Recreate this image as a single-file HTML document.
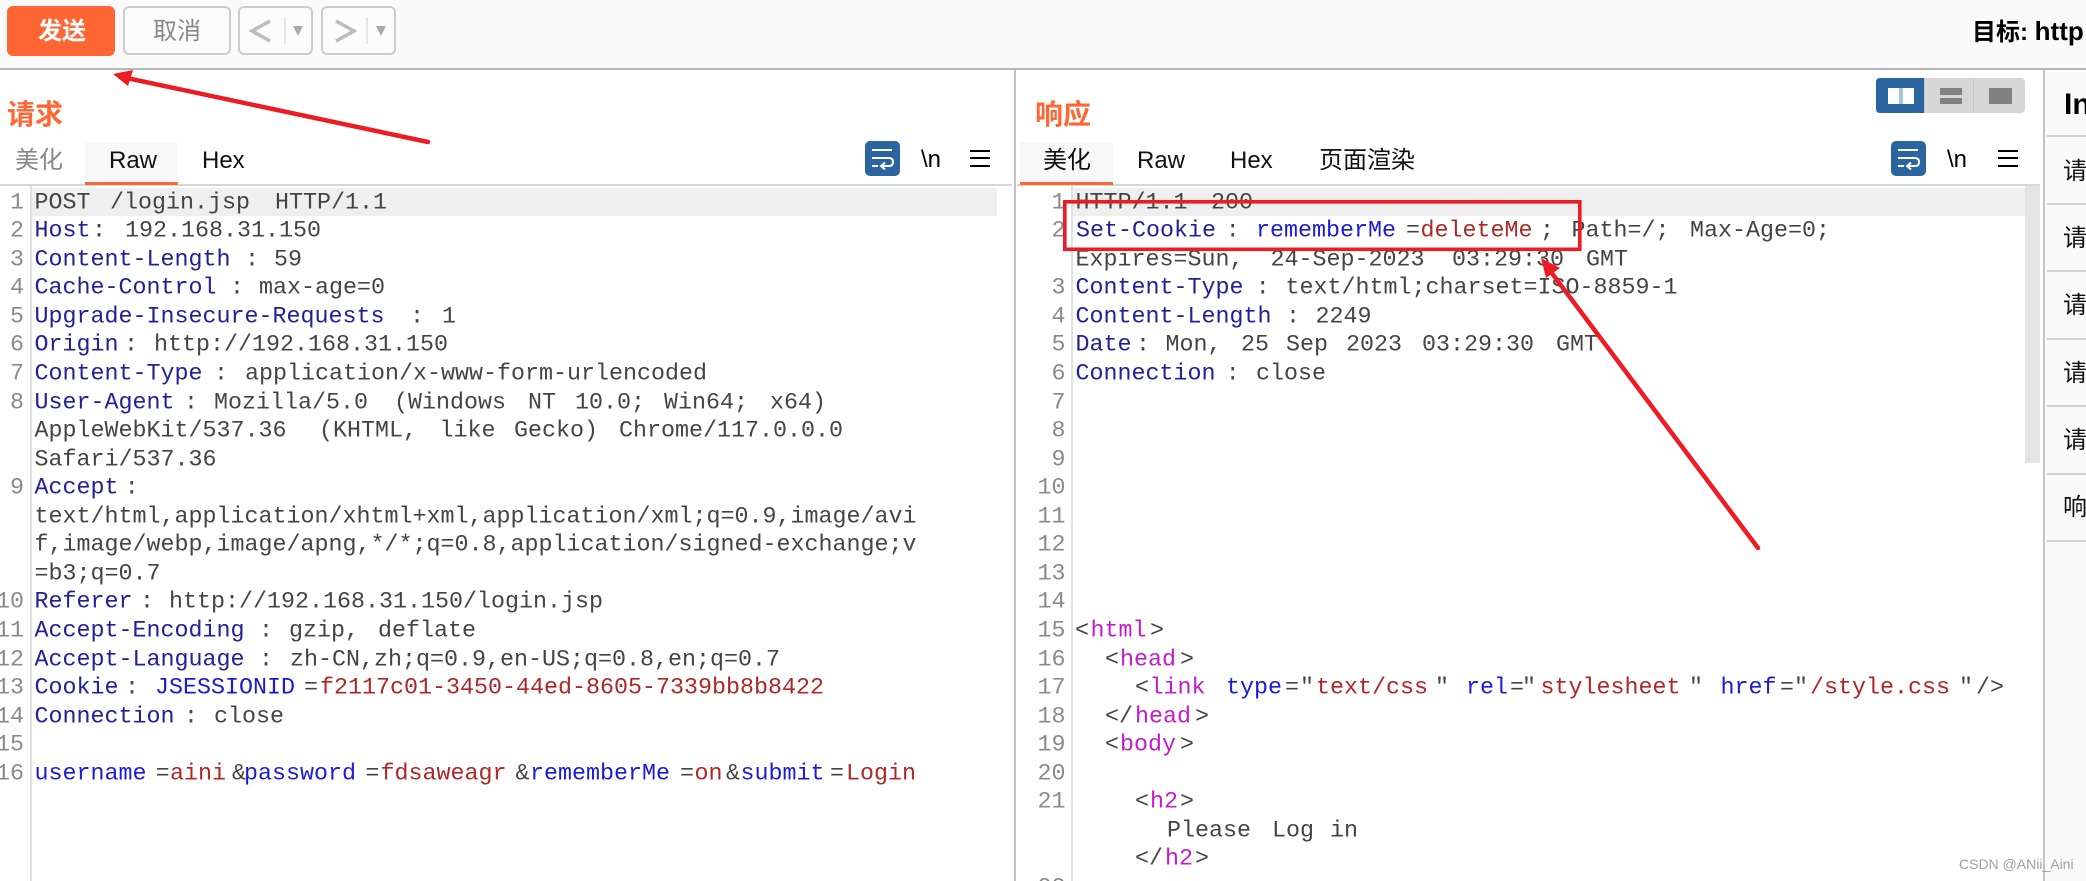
<!DOCTYPE html>
<html lang="zh">
<head>
<meta charset="utf-8">
<title>Repeater</title>
<style>
html{margin:0;padding:0;background:#fff;width:2086px;height:881px;overflow:hidden}
body{margin:0;padding:0;background:#fff;position:relative;width:2086px;height:881px;overflow:hidden;font-family:"Liberation Sans","Noto Sans CJK SC",sans-serif}
.a{position:absolute}
.btn{position:absolute;box-sizing:border-box;border:2px solid #ccc;border-radius:6px;background:#fcfcfc;top:6px;height:49px}
.tx{position:absolute;white-space:pre;line-height:34px;height:34px}
.tab{position:absolute;top:144px;font-size:24px;line-height:34px;height:34px;color:#111;white-space:pre}
.r{position:absolute;left:0;width:0;height:28.55px;font-family:"Liberation Mono",monospace;font-size:23.33px;line-height:28.55px;color:#444;transform:translateY(1.7px)}
.r span{position:absolute;top:0;white-space:pre}
.r b{position:absolute;top:0;font-weight:400;color:#8a8a8a;text-align:right;width:40px}
.L b{left:-16px}
.R b{left:1025.5px}
.k{color:#20209a}
.p{color:#1a1ad8}
.v{color:#b02626}
.t{color:#c41cc8}
.side{position:absolute;left:2047px;width:39px;height:2px;background:#d2d2d2}
.sq{position:absolute;left:2063px;font-size:24px;line-height:34px;color:#111}
</style>
</head>
<body>
<!-- toolbar -->
<div class="a" style="left:0;top:0;width:2086px;height:68px;background:#fafafa"></div>
<div class="a" style="left:0;top:68px;width:2086px;height:2px;background:#b9b5b5"></div>
<div class="a" style="left:7px;top:6px;width:108px;height:50px;background:#ff6633;border-radius:6px"></div>
<div class="tx" style="left:38px;top:15px;font-size:24px;font-weight:700;color:#fff">发送</div>
<div class="btn" style="left:123px;width:108px"></div>
<div class="tx" style="left:153px;top:15px;font-size:24px;color:#888">取消</div>
<div class="btn" style="left:238px;width:75px"></div>
<div class="btn" style="left:321px;width:75px"></div>
<svg class="a" style="left:0;top:0" width="420" height="68">
<polyline points="270,21 252,31 270,41" fill="none" stroke="#bbb" stroke-width="3.5"/>
<rect x="284" y="17" width="2" height="27" fill="#e6e6e6"/>
<polygon points="293,26 303,26 298,36" fill="#aaa"/>
<polyline points="336,21 354,31 336,41" fill="none" stroke="#bbb" stroke-width="3.5"/>
<rect x="366" y="17" width="2" height="27" fill="#e6e6e6"/>
<polygon points="376,26 386,26 381,36" fill="#aaa"/>
</svg>
<div class="tx" style="left:1972px;top:14px;font-size:24px;font-weight:700;color:#000;width:114px;overflow:hidden">目标: <span style="font-size:26px">http</span></div>

<!-- pane dividers -->
<div class="a" style="left:1014px;top:70px;width:2px;height:811px;background:#c4c4c4"></div>
<div class="a" style="left:2045px;top:70px;width:41px;height:811px;background:#fafafa"></div>
<div class="a" style="left:2043px;top:70px;width:2px;height:811px;background:#c4c4c4"></div>

<!-- headings -->
<div class="tx" style="left:7px;top:98px;font-size:28px;font-weight:700;color:#ff6633">请求</div>
<div class="tx" style="left:1035px;top:98px;font-size:28px;font-weight:700;color:#ff6633">响应</div>

<!-- tab lines -->
<div class="a" style="left:0;top:184px;width:1012px;height:2px;background:#d3d8d8"></div>
<div class="a" style="left:1017px;top:184px;width:1023px;height:2px;background:#d3d8d8"></div>
<div class="a" style="left:85px;top:142px;width:93px;height:40px;background:#f8f8f8"></div>
<div class="a" style="left:85px;top:182px;width:93px;height:3px;background:#ff6633"></div>
<div class="a" style="left:1020px;top:142px;width:93px;height:40px;background:#f8f8f8"></div>
<div class="a" style="left:1020px;top:182px;width:93px;height:3px;background:#ff6633"></div>
<div class="tab" style="left:15px;color:#888">美化</div>
<div class="tab" style="left:109px">Raw</div>
<div class="tab" style="left:202px">Hex</div>
<div class="tab" style="left:1043px">美化</div>
<div class="tab" style="left:1137px">Raw</div>
<div class="tab" style="left:1230px">Hex</div>
<div class="tab" style="left:1319px">页面渲染</div>

<!-- toggle -->
<svg class="a" style="left:1876px;top:78px" width="149" height="35">
<rect x="0" y="0" width="149" height="35" rx="4" fill="#d6d6d6"/>
<path d="M4 0H48V35H4Q0 35 0 31V4Q0 0 4 0Z" fill="#2a659f"/>
<rect x="97" y="0" width="1" height="35" fill="#c6c6c6"/>
<rect x="48" y="0" width="1" height="35" fill="#c6c6c6"/>
<rect x="12" y="10" width="26" height="16" fill="#a9c4de"/>
<rect x="12" y="10" width="11" height="16" fill="#fff"/>
<rect x="27" y="10" width="11" height="16" fill="#fff"/>
<rect x="64" y="10" width="22" height="7" fill="#808080"/>
<rect x="64" y="20" width="22" height="6" fill="#808080"/>
<rect x="113" y="10" width="23" height="16" fill="#808080"/>
</svg>

<!-- editor icons -->
<svg class="a" style="left:865px;top:141px" width="130" height="36">
<rect x="0" y="0" width="35" height="35" rx="5" fill="#2a659f"/>
<path d="M7 9H27M7 17H24Q28 17 28 21Q28 25 24 25H17M20 21.5L16 25L20 28.5M7 25H13" fill="none" stroke="#fff" stroke-width="2"/>
<text x="56" y="26" font-family="Liberation Sans" font-size="24" fill="#000">\n</text>
<path d="M105 10H125M105 17H125M105 25H125" fill="none" stroke="#000" stroke-width="2"/>
</svg>
<svg class="a" style="left:1891px;top:141px" width="130" height="36">
<rect x="0" y="0" width="35" height="35" rx="5" fill="#2a659f"/>
<path d="M7 9H27M7 17H24Q28 17 28 21Q28 25 24 25H17M20 21.5L16 25L20 28.5M7 25H13" fill="none" stroke="#fff" stroke-width="2"/>
<text x="56" y="26" font-family="Liberation Sans" font-size="24" fill="#000">\n</text>
<path d="M107 10H127M107 17H127M107 25H127" fill="none" stroke="#000" stroke-width="2"/>
</svg>

<!-- gutter / highlights -->
<div class="a" style="left:30px;top:186px;width:2px;height:695px;background:#e0e0e0"></div>
<div class="a" style="left:1071px;top:186px;width:2px;height:695px;background:#e0e0e0"></div>
<div class="a" style="left:32px;top:188px;width:965px;height:28px;background:#efefef"></div>
<div class="a" style="left:1073px;top:188px;width:952px;height:28px;background:#efefef"></div>
<div class="a" style="left:2025px;top:186px;width:15px;height:277px;background:#e4e4e4"></div>

<!-- request -->
<div class="r L" style="top:187.7px"><b>1</b><span style="left:34.5px">POST</span><span style="left:110px">/login.jsp</span><span style="left:275px">HTTP/1.1</span></div>
<div class="r L" style="top:216.25px"><b>2</b><span class="k" style="left:34.5px">Host</span><span style="left:92px">:</span><span style="left:125px">192.168.31.150</span></div>
<div class="r L" style="top:244.8px"><b>3</b><span class="k" style="left:34.5px">Content-Length</span><span style="left:245px">:</span><span style="left:274px">59</span></div>
<div class="r L" style="top:273.35px"><b>4</b><span class="k" style="left:34.5px">Cache-Control</span><span style="left:230px">:</span><span style="left:259px">max-age=0</span></div>
<div class="r L" style="top:301.9px"><b>5</b><span class="k" style="left:34.5px">Upgrade-Insecure-Requests</span><span style="left:410px">:</span><span style="left:442px">1</span></div>
<div class="r L" style="top:330.45px"><b>6</b><span class="k" style="left:34.5px">Origin</span><span style="left:124px">:</span><span style="left:154px">http://192.168.31.150</span></div>
<div class="r L" style="top:359px"><b>7</b><span class="k" style="left:34.5px">Content-Type</span><span style="left:214px">:</span><span style="left:245px">application/x-www-form-urlencoded</span></div>
<div class="r L" style="top:387.55px"><b>8</b><span class="k" style="left:34.5px">User-Agent</span><span style="left:184px">:</span><span style="left:214px">Mozilla/5.0</span><span style="left:394px">(Windows</span><span style="left:528px">NT</span><span style="left:575px">10.0;</span><span style="left:664px">Win64;</span><span style="left:770px">x64)</span></div>
<div class="r L" style="top:416.1px"><span style="left:34.5px">AppleWebKit/537.36</span><span style="left:319px">(KHTML,</span><span style="left:439.5px">like</span><span style="left:514px">Gecko)</span><span style="left:619px">Chrome/117.0.0.0</span></div>
<div class="r L" style="top:444.65px"><span style="left:34.5px">Safari/537.36</span></div>
<div class="r L" style="top:473.2px"><b>9</b><span class="k" style="left:34.5px">Accept</span><span style="left:124.7px">:</span></div>
<div class="r L" style="top:501.75px"><span style="left:34.5px">text/html,application/xhtml+xml,application/xml;q=0.9,image/avi</span></div>
<div class="r L" style="top:530.3px"><span style="left:34.5px">f,image/webp,image/apng,*/*;q=0.8,application/signed-exchange;v</span></div>
<div class="r L" style="top:558.85px"><span style="left:34.5px">=b3;q=0.7</span></div>
<div class="r L" style="top:587.4px"><b>10</b><span class="k" style="left:34.5px">Referer</span><span style="left:140px">:</span><span style="left:169px">http://192.168.31.150/login.jsp</span></div>
<div class="r L" style="top:615.95px"><b>11</b><span class="k" style="left:34.5px">Accept-Encoding</span><span style="left:259px">:</span><span style="left:289px">gzip,</span><span style="left:378px">deflate</span></div>
<div class="r L" style="top:644.5px"><b>12</b><span class="k" style="left:34.5px">Accept-Language</span><span style="left:259px">:</span><span style="left:290px">zh-CN,zh;q=0.9,en-US;q=0.8,en;q=0.7</span></div>
<div class="r L" style="top:673.05px"><b>13</b><span class="k" style="left:34.5px">Cookie</span><span style="left:125px">:</span><span class="p" style="left:155px">JSESSIONID</span><span style="left:304px">=</span><span class="v" style="left:320px">f2117c01-3450-44ed-8605-7339bb8b8422</span></div>
<div class="r L" style="top:701.6px"><b>14</b><span class="k" style="left:34.5px">Connection</span><span style="left:184px">:</span><span style="left:214px">close</span></div>
<div class="r L" style="top:730.15px"><b>15</b></div>
<div class="r L" style="top:758.7px"><b>16</b><span class="p" style="left:34.5px">username</span><span style="left:155.6px">=</span><span class="v" style="left:170px">aini</span><span style="left:232px">&amp;</span><span class="p" style="left:244px">password</span><span style="left:365.4px">=</span><span class="v" style="left:380.5px">fdsaweagr</span><span style="left:515.5px">&amp;</span><span class="p" style="left:530px">rememberMe</span><span style="left:680px">=</span><span class="v" style="left:694.5px">on</span><span style="left:726px">&amp;</span><span class="p" style="left:740.5px">submit</span><span style="left:830px">=</span><span class="v" style="left:846px">Login</span></div>

<!-- response -->
<div class="r R" style="top:187.7px"><b>1</b><span style="left:1075.5px">HTTP/1.1</span><span style="left:1211px">200</span></div>
<div class="r R" style="top:216.25px"><b>2</b><span class="k" style="left:1076px">Set-Cookie</span><span style="left:1225.7px">:</span><span class="p" style="left:1256px">rememberMe</span><span style="left:1406px">=</span><span class="v" style="left:1420.5px">deleteMe</span><span style="left:1540px">;</span><span style="left:1571.5px">Path=/;</span><span style="left:1690px">Max-Age=0;</span></div>
<div class="r R" style="top:244.8px"><span style="left:1075.5px">Expires=Sun,</span><span style="left:1270.5px">24-Sep-2023</span><span style="left:1452px">03:29:30</span><span style="left:1586px">GMT</span></div>
<div class="r R" style="top:273.35px"><b>3</b><span class="k" style="left:1075.5px">Content-Type</span><span style="left:1255.7px">:</span><span style="left:1285.5px">text/html;charset=ISO-8859-1</span></div>
<div class="r R" style="top:301.9px"><b>4</b><span class="k" style="left:1075.5px">Content-Length</span><span style="left:1286px">:</span><span style="left:1315.5px">2249</span></div>
<div class="r R" style="top:330.45px"><b>5</b><span class="k" style="left:1075.5px">Date</span><span style="left:1136px">:</span><span style="left:1165.5px">Mon,</span><span style="left:1241px">25</span><span style="left:1286px">Sep</span><span style="left:1346px">2023</span><span style="left:1422px">03:29:30</span><span style="left:1556px">GMT</span></div>
<div class="r R" style="top:359px"><b>6</b><span class="k" style="left:1075.5px">Connection</span><span style="left:1225.7px">:</span><span style="left:1256px">close</span></div>
<div class="r R" style="top:387.55px"><b>7</b></div>
<div class="r R" style="top:416.1px"><b>8</b></div>
<div class="r R" style="top:444.65px"><b>9</b></div>
<div class="r R" style="top:473.2px"><b>10</b></div>
<div class="r R" style="top:501.75px"><b>11</b></div>
<div class="r R" style="top:530.3px"><b>12</b></div>
<div class="r R" style="top:558.85px"><b>13</b></div>
<div class="r R" style="top:587.4px"><b>14</b></div>
<div class="r R" style="top:615.95px"><b>15</b><span style="left:1075px">&lt;</span><span class="t" style="left:1090.5px">html</span><span style="left:1150px">&gt;</span></div>
<div class="r R" style="top:644.5px"><b>16</b><span style="left:1105px">&lt;</span><span class="t" style="left:1120px">head</span><span style="left:1180px">&gt;</span></div>
<div class="r R" style="top:673.05px"><b>17</b><span style="left:1135px">&lt;</span><span class="t" style="left:1149.5px">link</span><span class="p" style="left:1226px">type</span><span style="left:1285px">=</span><span style="left:1300px">"</span><span class="v" style="left:1316px">text/css</span><span style="left:1435px">"</span><span class="p" style="left:1466px">rel</span><span style="left:1510px">=</span><span style="left:1522px">"</span><span class="v" style="left:1540.5px">stylesheet</span><span style="left:1689px">"</span><span class="p" style="left:1720.5px">href</span><span style="left:1780px">=</span><span style="left:1794px">"</span><span class="v" style="left:1810px">/style.css</span><span style="left:1959px">"</span><span style="left:1976px">/&gt;</span></div>
<div class="r R" style="top:701.6px"><b>18</b><span style="left:1105px">&lt;/</span><span class="t" style="left:1135px">head</span><span style="left:1195px">&gt;</span></div>
<div class="r R" style="top:730.15px"><b>19</b><span style="left:1105px">&lt;</span><span class="t" style="left:1120px">body</span><span style="left:1180px">&gt;</span></div>
<div class="r R" style="top:758.7px"><b>20</b></div>
<div class="r R" style="top:787.25px"><b>21</b><span style="left:1135px">&lt;</span><span class="t" style="left:1150px">h2</span><span style="left:1180px">&gt;</span></div>
<div class="r R" style="top:815.8px"><span style="left:1167px">Please</span><span style="left:1272px">Log</span><span style="left:1330px">in</span></div>
<div class="r R" style="top:844.35px"><span style="left:1135px">&lt;/</span><span class="t" style="left:1165px">h2</span><span style="left:1195px">&gt;</span></div>
<div class="r R" style="top:872.9px"><b>22</b></div>

<!-- side panel -->
<div class="tx" style="left:2064px;top:88px;font-size:30px;font-weight:700;color:#000">In</div>
<div class="side" style="top:135px"></div>
<div class="side" style="top:203px"></div>
<div class="side" style="top:270px"></div>
<div class="side" style="top:338px"></div>
<div class="side" style="top:405px"></div>
<div class="side" style="top:473px"></div>
<div class="side" style="top:540px"></div>
<div class="sq" style="top:155px">请</div>
<div class="sq" style="top:222px">请</div>
<div class="sq" style="top:289px">请</div>
<div class="sq" style="top:357px">请</div>
<div class="sq" style="top:424px">请</div>
<div class="sq" style="top:491px">响</div>

<!-- annotations -->
<svg class="a" style="left:0;top:0" width="2086" height="881">
<line x1="428" y1="142" x2="122" y2="77" stroke="#ed1c24" stroke-width="4.5" stroke-linecap="round"/>
<polygon points="113,74 133,70 128,86" fill="#ed1c24"/>
<rect x="1064.8" y="201.8" width="515" height="47.5" fill="none" stroke="#ed1c24" stroke-width="3.6"/>
<line x1="1758" y1="548" x2="1548" y2="268" stroke="#ed1c24" stroke-width="4.5" stroke-linecap="round"/>
<polygon points="1541,258 1560,268 1546,278" fill="#ed1c24"/>
</svg>
<div class="a" style="left:1959px;top:855px;font-size:14px;line-height:18px;color:#a0a0a0;white-space:pre">CSDN @ANii_Aini</div>
</body>
</html>
